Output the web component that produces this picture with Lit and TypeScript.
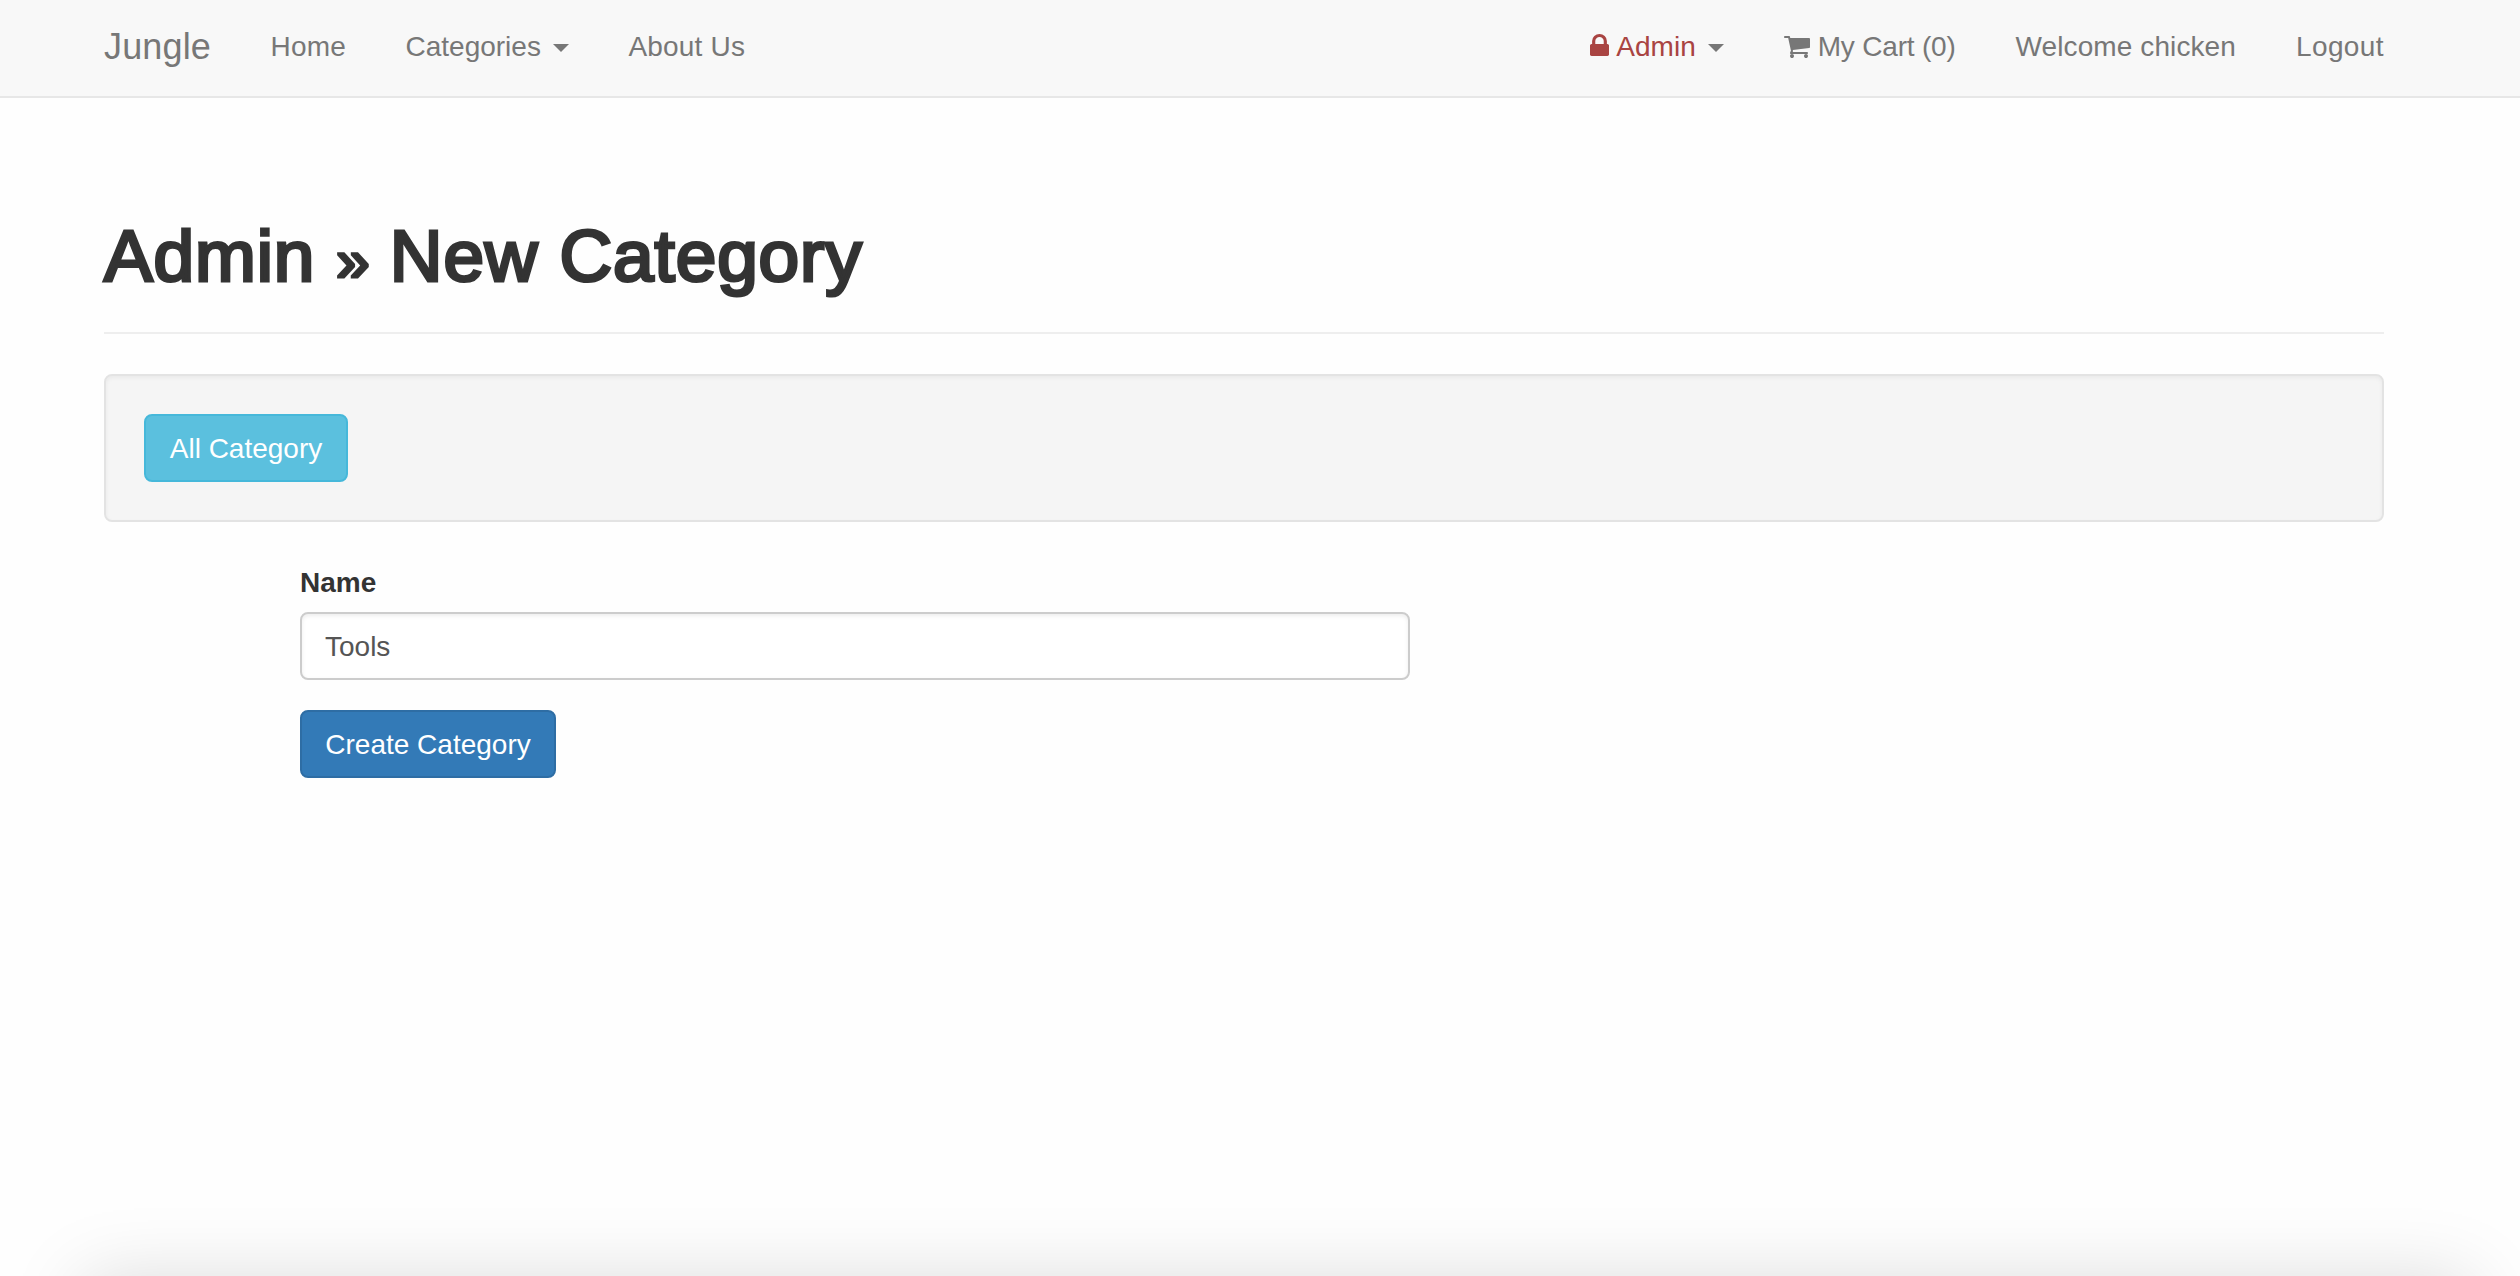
import { LitElement, html, css } from "lit";
import { customElement } from "lit/decorators.js";

@customElement("app-root")
export class AppRoot extends LitElement {
  static styles = css`
    :host {
      display: block;
      height: 1276px;
      position: relative;
      overflow: hidden;
      background: #fefefe;
      color: #333;
      font: 28px/40px "Liberation Sans", Arial, sans-serif;
    }
    * { box-sizing: border-box; }
    a { color: inherit; text-decoration: none; }
    .navbar {
      height: 98px;
      background: #f8f8f8;
      border-bottom: 2px solid #e7e7e7;
      color: #777;
      padding: 0 136px 0 104px;
      display: flex;
      justify-content: space-between;
    }
    .group { display: flex; gap: 60px; padding-top: 27px; white-space: nowrap; }
    .start { gap: 59.5px; }
    .link { display: flex; align-items: center; height: 40px; }
    .brand { font-size: 36px; letter-spacing: 0.15px; }
    .home { letter-spacing: 0.2px; }
    .about { letter-spacing: 0.2px; }
    .mycart { letter-spacing: -0.2px; }
    .welcome { letter-spacing: 0.1px; }
    .logout { letter-spacing: 0.4px; }
    .caret {
      border-top: 8px solid #777;
      border-left: 8px solid transparent;
      border-right: 8px solid transparent;
      margin-left: 12px;
      margin-top: 2px;
    }
    .danger { color: #a94442; }
    .lock { width: 19px; height: 22px; margin: 0 7px 4px 0; }
    .cart { width: 26px; height: 22px; margin: 0 8px 0 0; }
    .icon { fill: currentColor; flex: none; display: block; }
    .page { padding: 0 136px 0 104px; }
    .header {
      padding: 116px 0 34px;
      border-bottom: 2px solid #eee;
      margin-bottom: 40px;
    }
    .title {
      margin: 0;
      font-size: 73px;
      line-height: 84px;
      height: 84px;
      font-weight: 400;
      letter-spacing: 0.85px;
      -webkit-text-stroke: 3.2px #333;
    }
    .sep { font-size: 60px; line-height: 1; letter-spacing: -1px; }
    .well {
      height: 148px;
      padding: 38px;
      background: #f5f5f5;
      border: 2px solid #e3e3e3;
      border-radius: 8px;
      box-shadow: inset 0 2px 4px rgba(0, 0, 0, 0.05);
    }
    .btn {
      display: inline-flex;
      align-items: center;
      justify-content: center;
      height: 68px;
      padding: 2px 0 0;
      border: 2px solid;
      border-radius: 8px;
      color: #fff;
      font: inherit;
      white-space: nowrap;
    }
    .info { width: 204px; background: #5bc0de; border-color: #46b8da; }
    .primary { width: 256px; background: #337ab7; border-color: #2e6da4; }
    .form {
      margin: 41px 0 0 196px;
      width: 1110px;
      display: flex;
      flex-direction: column;
      align-items: flex-start;
    }
    .label { font-weight: 700; margin-bottom: 9px; }
    .input {
      width: 100%;
      height: 68px;
      padding: 14px 23px 12px;
      border: 2px solid #ccc;
      border-radius: 8px;
      background: #fff;
      color: #555;
      font: inherit;
      box-shadow: inset 0 2px 4px rgba(0, 0, 0, 0.075);
      margin-bottom: 30px;
      outline: none;
    }
    .shade {
      position: absolute;
      left: 84px;
      right: 48px;
      top: 1281px;
      height: 300px;
      box-shadow: 0 0 72px rgba(0, 0, 0, 0.15);
    }
  `;

  render() {
    return html`
      <nav class="navbar">
        <div class="group start">
          <a class="link brand">Jungle</a>
          <a class="link home">Home</a>
          <a class="link">Categories<span class="caret"></span></a>
          <a class="link about">About Us</a>
        </div>
        <div class="group">
          <a class="link">
            <svg class="icon lock danger" viewBox="0 0 1152 1408" preserveAspectRatio="none"><path d="M320 640h512V448q0-106-75-181t-181-75-181 75-75 181v192zm832 96v576q0 40-28 68t-68 28H96q-40 0-68-28t-28-68V736q0-40 28-68t68-28h32V448q0-184 132-316T576 0t316 132 132 316v192h32q40 0 68 28t28 68z"/></svg>
            <span class="danger">Admin</span><span class="caret"></span>
          </a>
          <a class="link mycart">
            <svg class="icon cart" viewBox="0 0 1664 1408" preserveAspectRatio="none"><path d="M640 1280q0 52-38 90t-90 38-90-38-38-90 38-90 90-38 90 38 38 90zm896 0q0 52-38 90t-90 38-90-38-38-90 38-90 90-38 90 38 38 90zm128-1088v512q0 24-16.500 42.500T1607 768L563 890q13 60 13 70 0 16-24 64h920q26 0 45 19t19 45-19 45-45 19H448q-26 0-45-19t-19-45q0-11 8-31.500t16-36 21.500-40T445 951L268 128H64q-26 0-45-19T0 64 19 19 64 0h256q16 0 28.500 6.500T368 22t13 24.500 8 26 5.500 29.500 4.500 26h1201q26 0 45 19t19 45z"/></svg>
            <span>My Cart (0)</span>
          </a>
          <a class="link welcome">Welcome chicken</a>
          <a class="link logout">Logout</a>
        </div>
      </nav>
      <main class="page">
        <header class="header"><h1 class="title">Admin <span class="sep">»</span> New Category</h1></header>
        <section class="well"><a class="btn info">All Category</a></section>
        <form class="form">
          <label class="label" for="name">Name</label>
          <input class="input" id="name" type="text" .value=${"Tools"} />
          <button class="btn primary" type="button">Create Category</button>
        </form>
      </main>
      <div class="shade"></div>
    `;
  }
}
